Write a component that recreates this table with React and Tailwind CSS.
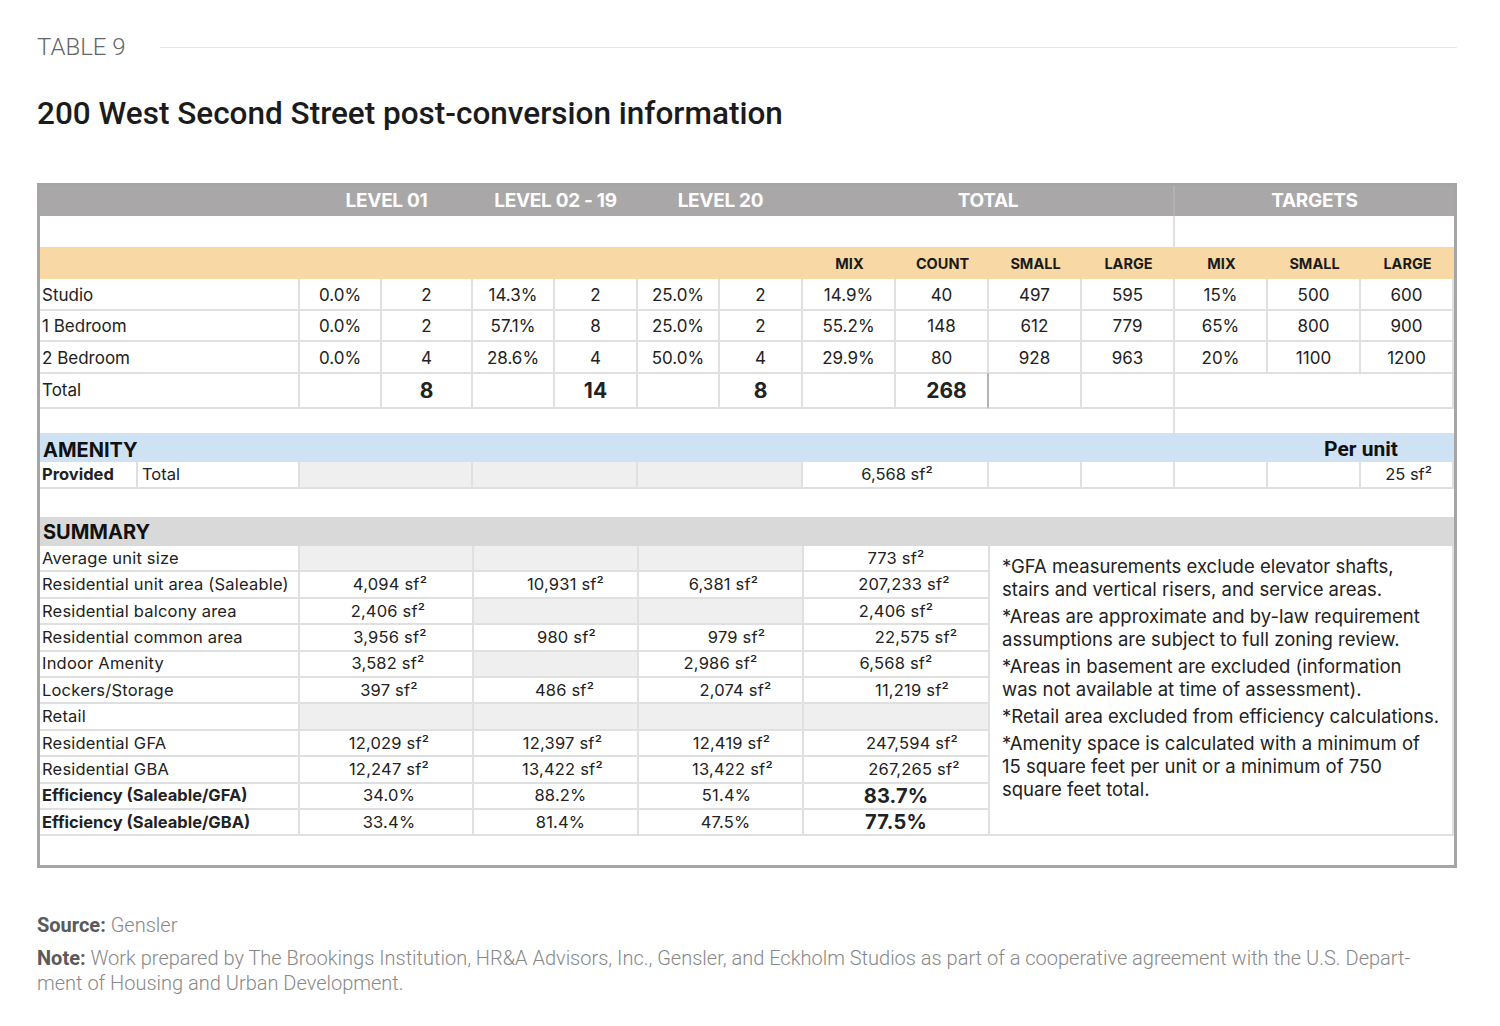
const COLS = "grid grid-cols-[260px_82px_91px_82px_83px_82px_83px_93px_93px_93px_93px_93px_93px_1fr]";
const SUM = "grid grid-cols-[260px_174px_165px_165px_186px_1fr] grid-rows-[repeat(11,26.4px)]";
const LINE = "border-r-2 border-b-2 border-[#e0e0e0]";

const units = [
  ["Studio", "0.0%", "2", "14.3%", "2", "25.0%", "2", "14.9%", "40", "497", "595", "15%", "500", "600"],
  ["1 Bedroom", "0.0%", "2", "57.1%", "8", "25.0%", "2", "55.2%", "148", "612", "779", "65%", "800", "900"],
  ["2 Bedroom", "0.0%", "4", "28.6%", "4", "50.0%", "4", "29.9%", "80", "928", "963", "20%", "1100", "1200"],
];

// each value is [text, extra classes]; null = grey empty cell
const summary = [
  ["Average unit size", null, null, null, ["773 sf²", ""]],
  ["Residential unit area (Saleable)", ["4,094 sf²", "pl-[8px]"], ["10,931 sf²", "pl-[20px]"], ["6,381 sf²", "pl-[6px]"], ["207,233 sf²", "pl-[16px]"]],
  ["Residential balcony area", ["2,406 sf²", "pl-[4px]"], null, null, ["2,406 sf²", ""]],
  ["Residential common area", ["3,956 sf²", "pl-[8px]"], ["980 sf²", "pl-[22px]"], ["979 sf²", "pl-[32px]"], ["22,575 sf²", "pl-[40px]"]],
  ["Indoor Amenity", ["3,582 sf²", "pl-[4px]"], null, ["2,986 sf²", ""], ["6,568 sf²", ""]],
  ["Lockers/Storage", ["397 sf²", "pl-[6px]"], ["486 sf²", "pl-[18px]"], ["2,074 sf²", "pl-[30px]"], ["11,219 sf²", "pl-[32px]"]],
  ["Retail", null, null, null, null],
  ["Residential GFA", ["12,029 sf²", "pl-[6px]"], ["12,397 sf²", "pl-[14px]"], ["12,419 sf²", "pl-[22px]"], ["247,594 sf²", "pl-[32px]"]],
  ["Residential GBA", ["12,247 sf²", "pl-[6px]"], ["13,422 sf²", "pl-[14px]"], ["13,422 sf²", "pl-[24px]"], ["267,265 sf²", "pl-[36px]"]],
  ["Efficiency (Saleable/GFA)", ["34.0%", "pl-[6px]"], ["88.2%", "pl-[10px]"], ["51.4%", "pl-[12px]"], ["83.7%", ""], true],
  ["Efficiency (Saleable/GBA)", ["33.4%", "pl-[6px]"], ["81.4%", "pl-[10px]"], ["47.5%", "pl-[10px]"], ["77.5%", ""], true],
];

const notes = [
  ["*GFA measurements exclude elevator shafts,", "stairs and vertical risers, and service areas."],
  ["*Areas are approximate and by-law requirement", "assumptions are subject to full zoning review."],
  ["*Areas in basement are excluded (information", "was not available at time of assessment)."],
  ["*Retail area excluded from efficiency calculations."],
  ["*Amenity space is calculated with a minimum of", "15 square feet per unit or a minimum of 750", "square feet total."],
];

function Cell({ className = "", children }) {
  return (
    <div className={"flex items-center justify-center whitespace-nowrap " + LINE + " " + className}>
      {children}
    </div>
  );
}

function Label({ className = "", children }) {
  return (
    <div className={"flex items-center pl-[2px] whitespace-nowrap " + LINE + " " + className}>
      {children}
    </div>
  );
}

export default function App() {
  return (
    <div className="min-h-[1026px] bg-white pl-[37px] pr-[43px] pt-[34px] font-['Roboto',sans-serif]">
      <div className="flex items-center h-[26px]">
        <span className="text-[24px] font-light text-[#666] leading-none">TABLE 9</span>
        <div className="flex-1 h-px bg-[#e8e8e8] ml-[34px]" />
      </div>

      <h1 className="mt-[35px] text-[31.5px] leading-[38px] font-medium text-[#1b1b1b]">
        200 West Second Street post-conversion information
      </h1>

      <div className="mt-[50px] border-[3px] border-[#a5a5a5] bg-white font-['Inter',sans-serif] text-[#222]">
        {/* level header */}
        <div className={COLS + " h-[30px] bg-[#a9a7a7] text-white font-bold text-[19px] tracking-[-0.3px]"}>
          <div />
          <div className="col-span-2 flex items-center justify-center">LEVEL 01</div>
          <div className="col-span-2 flex items-center justify-center">LEVEL 02 - 19</div>
          <div className="col-span-2 flex items-center justify-center">LEVEL 20</div>
          <div className="col-span-4 flex items-center justify-center border-r-2 border-[#b3b1b1]">TOTAL</div>
          <div className="col-span-3 flex items-center justify-center">TARGETS</div>
        </div>

        <div className={COLS + " h-[31px]"}>
          <div className="col-span-11 border-r-2 border-[#e0e0e0]" />
          <div className="col-span-3" />
        </div>

        {/* sub header */}
        <div className={COLS + " h-[32px] bg-[#f8d8a4] text-[14.5px] font-bold text-[#1a1a1a]"}>
          <div className="col-span-7" />
          {["MIX", "COUNT", "SMALL", "LARGE", "MIX", "SMALL", "LARGE"].map((h, i) => (
            <div key={i} className="flex items-center justify-center pt-[1px]">{h}</div>
          ))}
        </div>

        {units.map((r, i) => (
          <div key={r[0]} className={COLS + (i === 1 ? " h-[32px]" : " h-[31px]") + " text-[17px]"}>
            <Label className="pt-[4px]">{r[0]}</Label>
            {r.slice(1).map((v, j) => (
              <Cell key={j} className="pt-[4px]">{v}</Cell>
            ))}
          </div>
        ))}

        <div className={COLS + " h-[32px] text-[17px]"}>
          <Label className="pt-[2px]">Total</Label>
          <Cell />
          <Cell className="text-[21px] font-bold pt-[2px]">8</Cell>
          <Cell />
          <Cell className="text-[21px] font-bold pt-[2px]">14</Cell>
          <Cell />
          <Cell className="text-[21px] font-bold pt-[2px]">8</Cell>
          <Cell />
          <Cell className="text-[21px] font-bold pt-[2px] pl-[10px] border-r-[#b5b5b5]">268</Cell>
          <Cell />
          <Cell />
          <Cell className="col-span-3" />
        </div>

        <div className={COLS + " h-[28px]"}>
          <div className="col-span-11 border-r-2 border-[#e0e0e0]" />
          <div className="col-span-3" />
        </div>

        {/* amenity */}
        <div className={COLS + " h-[29px] bg-[#cfe2f3] text-[20px] font-bold text-[#111]"}>
          <div className="col-span-12 flex items-center pl-[3px] pt-[1px]">AMENITY</div>
          <div className="col-span-2 flex items-center justify-center font-['Roboto',sans-serif] text-[21px] pt-[1px]">Per unit</div>
        </div>

        <div className={COLS + " h-[27px] text-[16.5px]"}>
          <div className={"flex " + LINE}>
            <div className="w-[98px] flex items-center pl-[2px] font-bold border-r-2 border-[#e0e0e0]">Provided</div>
            <div className="flex items-center pl-[4px]">Total</div>
          </div>
          <Cell className="col-span-2 bg-[#efefef]" />
          <Cell className="col-span-2 bg-[#efefef]" />
          <Cell className="col-span-2 bg-[#efefef]" />
          <Cell className="col-span-2 pl-[4px]">6,568 sf²</Cell>
          <Cell />
          <Cell />
          <Cell />
          <Cell />
          <Cell className="justify-end pr-[20px]">25 sf²</Cell>
        </div>

        <div className="h-[28px]" />

        <div className="h-[29px] bg-[#d9d9d9] flex items-center pl-[3px] pt-[1px] text-[20px] font-bold text-[#111]">
          SUMMARY
        </div>

        {/* summary rows */}
        <div className={SUM + " text-[16.5px] tracking-[0.2px]"}>
          {summary.map((r, i) => (
            <div key={r[0]} className="contents">
              <Label className={r[5] ? "font-bold tracking-normal" : ""}>{r[0]}</Label>
              {[r[1], r[2], r[3], r[4]].map((v, j) =>
                v === null ? (
                  <Cell key={j} className="bg-[#efefef]" />
                ) : (
                  <Cell key={j} className={v[1] + (j === 3 && r[5] ? " text-[20px] font-bold" : "")}>{v[0]}</Cell>
                )
              )}
              {i === 0 && (
                <div className={"row-span-11 pl-[12px] pt-[9px] text-[18.5px] leading-[23px] tracking-normal text-[#222] " + LINE}>
                  {notes.map((p, k) => (
                    <div key={k} className="mb-[4px] whitespace-nowrap">
                      {p.map((l, m) => (
                        <div key={m}>{l}</div>
                      ))}
                    </div>
                  ))}
                </div>
              )}
            </div>
          ))}
        </div>

        <div className="h-[29px]" />
      </div>

      <div className="mt-[45px] text-[20px] leading-[25px] text-[#888] font-light">
        <p>
          <span className="font-bold text-[#5a5a5a]">Source:</span> Gensler
        </p>
        <p className="mt-[8px]">
          <span className="font-bold text-[#5a5a5a]">Note:</span> Work prepared by The Brookings Institution, HR&amp;A Advisors, Inc., Gensler, and Eckholm Studios as part of a cooperative agreement with the U.S. Depart-
          <br />
          ment of Housing and Urban Development.
        </p>
      </div>
    </div>
  );
}
